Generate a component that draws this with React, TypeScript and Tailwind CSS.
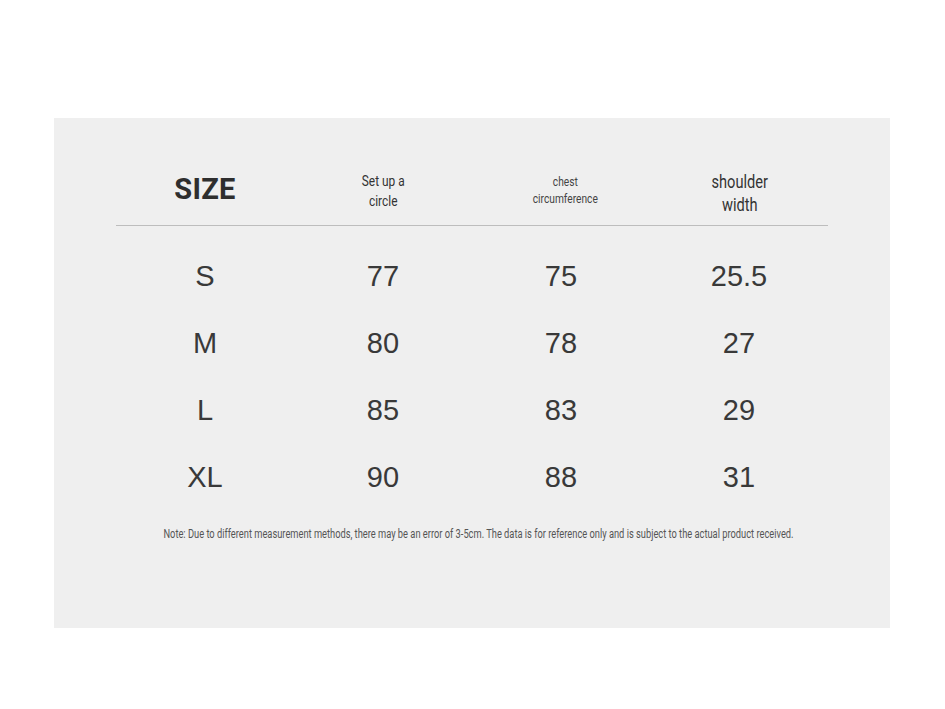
const rows = [
  ['S', '77', '75', '25.5'],
  ['M', '80', '78', '27'],
  ['L', '85', '83', '29'],
  ['XL', '90', '88', '31'],
];

export default function App() {
  return (
    <div className="w-[945px] h-[709px] bg-white pt-[118px]">
      <div className="ml-[54px] w-[836px] h-[510px] bg-[#efefef] pt-[36px] px-[62px]">
        <div className="grid grid-cols-4 h-[72px] items-center border-b border-[#bdbdbd] text-[#333]">
          <div className="text-center font-['Roboto'] font-bold text-[29px] tracking-[0.3px] text-[#2e2e2e] leading-none">
            SIZE
          </div>
          <div className="flex justify-center">
            <div className="text-center font-['Roboto'] text-[14px] leading-[20px] scale-x-[0.85] pt-[2px]">
              Set up a<br />circle
            </div>
          </div>
          <div className="flex justify-center pl-[8px]">
            <div className="text-center font-['Roboto'] text-[12px] leading-[17px] scale-x-[0.85] text-[#444] pt-[2px]">
              chest<br />circumference
            </div>
          </div>
          <div className="flex justify-center pl-[2px]">
            <div className="text-center font-['Roboto'] text-[19px] leading-[23px] scale-x-[0.77] pt-[6px]">
              shoulder<br />width
            </div>
          </div>
        </div>
        <div className="pt-[17px]">
          {rows.map((r) => (
            <div key={r[0]} className="grid grid-cols-4 h-[67px] items-center">
              {r.map((c, i) => (
                <div key={i} className="text-center font-['Liberation_Sans'] text-[29px] text-[#393939] leading-none">
                  {c}
                </div>
              ))}
            </div>
          ))}
        </div>
        <div className="mt-[16px] flex justify-center pl-[12px]">
          <div className="whitespace-nowrap font-['Roboto'] text-[12px] leading-[14px] text-[#555] scale-x-[0.775]">
            Note: Due to different measurement methods, there may be an error of 3-5cm. The data is for reference only and is subject to the actual product received.
          </div>
        </div>
      </div>
    </div>
  );
}
